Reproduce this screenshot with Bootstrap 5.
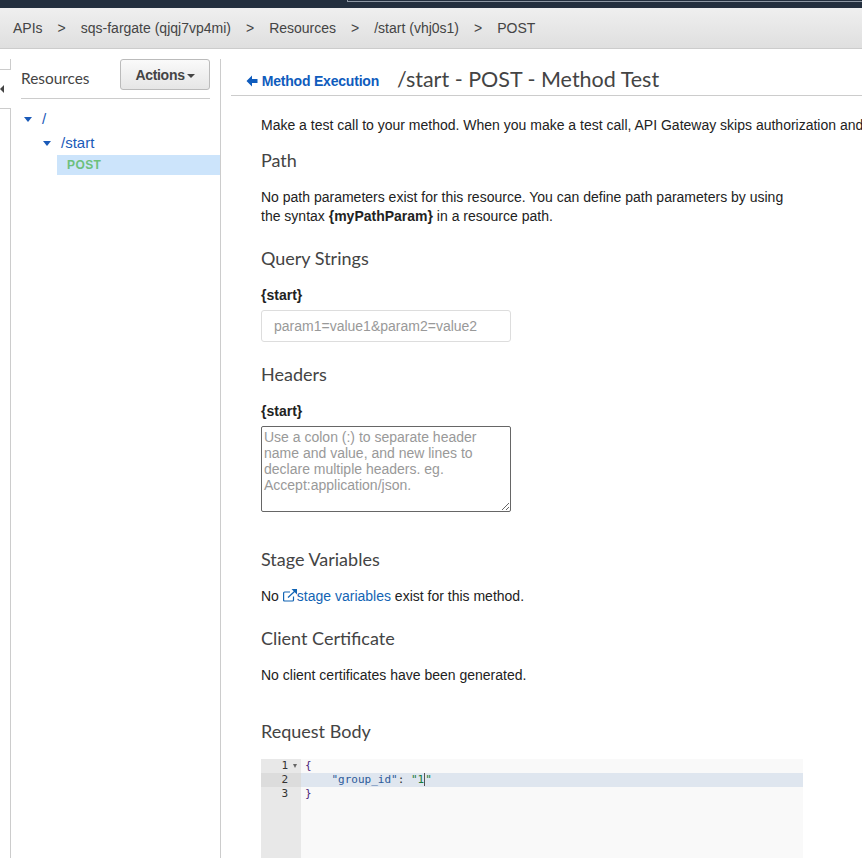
<!DOCTYPE html>
<html lang="en">
<head>
    <meta charset="UTF-8">
    <meta name="viewport" content="width=device-width, initial-scale=1.0">
    <title>API Gateway - Method Test</title>
    <link rel="stylesheet" href="https://cdn.jsdelivr.net/npm/bootstrap@5.3.3/dist/css/bootstrap.min.css">
    <script src="https://cdn.jsdelivr.net/npm/bootstrap@5.3.3/dist/js/bootstrap.bundle.min.js"></script>
    <style>
        html, body { height: 858px; overflow: hidden; }
        body { font-family: "Liberation Sans", Arial, sans-serif; font-size: 14px; line-height: 16px; color: #222; background: #fff; }
        .top-strip { height: 8px; background: #232f3e; }
        .search-edge { height: 2px; margin-left: 347px; border: solid #8d97a3; border-width: 0 0 1px 1px; }
        .crumbs { height: 41px; background: linear-gradient(#efefef, #dfdfdf); border-bottom: 1px solid #ccc; color: #444; padding-left: 13px; }
        .crumbs .sep { margin: 0 15px; }
        .workspace { height: 809px; }
        .rail { width: 11px; padding-top: 10px; flex: none; }
        .rail-box { height: 11px; border: solid #ccc; border-width: 0 1px 1px 0; }
        .rail-arrow { height: 38px; }
        .rail-tri { width: 0; border-right: 4px solid #444; border-top: 4px solid transparent; border-bottom: 4px solid transparent; }
        .rail-body { height: 760px; border: solid #ccc; border-width: 1px 1px 0 0; }
        .tree-pane { width: 210px; flex: none; border-right: 1px solid #ccc; margin-top: 10px; padding-left: 10px; }
        .tree-head { width: 189px; height: 40px; border-bottom: 1px solid #ccc; }
        .tree-title { font-family: Lato, sans-serif; font-size: 15.400px; color: #444; padding-top: 11px; }
        .actions-btn { width: 90px; height: 31px; padding: 0; font-size: 14px; font-weight: 700; color: #444; line-height: 28px; letter-spacing: -.3px; background: linear-gradient(#fafafa, #e6e6e6); border: 1px solid #bbb; border-radius: 3px; }
        .caret-mini { display: inline-block; vertical-align: middle; border-top: 4px solid #444; border-left: 4px solid transparent; border-right: 4px solid transparent; margin-left: 2px; }
        .tree-row { color: #1a5ab8; font-size: 15px; }
        .tree-arrow { display: inline-block; border-top: 5px solid #1a5ab8; border-left: 4.500px solid transparent; border-right: 4.500px solid transparent; }
        .tree-root { height: 16px; margin-top: 12px; padding-left: 3px; gap: 10px; }
        .tree-start { height: 16px; margin-top: 8px; padding-left: 22px; gap: 10px; }
        .tree-post { height: 20px; margin-top: 4px; margin-left: 36px; background: #cce4fb; color: #6cc07c; font-weight: 700; font-size: 12px; line-height: 20px; padding-left: 10px; letter-spacing: .4px; }
        .main-pane { flex: 1; min-width: 0; padding-left: 10px; margin-top: 10px; overflow: hidden; }
        .page-head { height: 37px; border-bottom: 1px solid #ccc; padding-left: 15px; white-space: nowrap; }
        .back-link { font-size: 14px; font-weight: 700; color: #0f5cbd; letter-spacing: -.2px; text-decoration: none; width: 151px; padding-top: 14px; }
        .back-link svg { vertical-align: -1px; }
        .page-title { font-family: Lato, sans-serif; font-size: 21.500px; line-height: 26px; font-weight: 400; color: #444; margin: 0; padding-top: 7px; }
        .test-body { padding-left: 30px; width: 631px; }
        .intro { margin: 21px 0 0; white-space: nowrap; line-height: 16px; }
        .sect { font-family: Lato, sans-serif; font-size: 18px; line-height: 22px; font-weight: 400; color: #444; margin: 0; }
        .sect-path { margin-top: 16px; }
        .sect-query { margin-top: 21px; }
        .sect-headers { margin-top: 21px; }
        .sect-stage { margin-top: 36px; }
        .sect-client { margin-top: 21px; }
        .sect-request { margin-top: 35px; }
        .plain { margin: 17px 0 0; line-height: 19px; }
        .field-label { font-weight: 700; font-size: 14px; margin: 18px 0 0; display: block; color: #222; }
        .query-input { width: 250px; height: 32px; margin-top: 7px; border: 1px solid #ddd; border-radius: 3px; padding: 0 12px; font-size: 14px; display: block; }
        .query-input::placeholder, .header-input::placeholder { color: #999; opacity: 1; }
        .header-input { width: 250px; height: 86px; margin-top: 7px; border: 1px solid #666; border-radius: 2px; padding: 2px; font-family: "Liberation Sans", Arial, sans-serif; font-size: 14px; line-height: 16px; display: block; }
        .doc-link { color: #1264b4; text-decoration: none; }
        .doc-link svg { vertical-align: -1px; }
        .editor { width: 542px; height: 110px; margin-top: 17px; background: #f9f9f9; font-family: "DejaVu Sans Mono", monospace; font-size: 11px; line-height: 14px; }
        .gutter { width: 40px; flex: none; background: #e8e8e8; color: #333; }
        .gutter-line { height: 14px; padding-right: 13px; text-align: right; position: relative; }
        .gutter-line.on { background: #dcdcdc; }
        .fold-mark { position: absolute; right: 4px; top: 5px; border-top: 4px solid #666; border-left: 2.500px solid transparent; border-right: 2.500px solid transparent; }
        .code-line { height: 14px; padding-left: 4px; white-space: pre; color: #333; }
        .code-line.on { background: #dfe6ef; }
        .k-key { color: #2d5a9a; }
        .k-str { color: #1a7a3a; }
        .k-brace { color: #4b1f7a; }
        .ed-cursor { border-left: 1px solid #555; }
    </style>
</head>
<body>
    <div class="top-strip"><div class="search-edge"></div></div>
    <div class="crumbs d-flex align-items-center">
        <span>APIs</span><span class="sep">&gt;</span>
        <span>sqs-fargate (qjqj7vp4mi)</span><span class="sep">&gt;</span>
        <span>Resources</span><span class="sep">&gt;</span>
        <span>/start (vhj0s1)</span><span class="sep">&gt;</span>
        <span>POST</span>
    </div>
    <div class="workspace d-flex">
        <div class="rail">
            <div class="rail-box"></div>
            <div class="rail-arrow d-flex align-items-center"><div class="rail-tri"></div></div>
            <div class="rail-body"></div>
        </div>
        <div class="tree-pane">
            <div class="tree-head d-flex justify-content-between align-items-start">
                <div class="tree-title">Resources</div>
                <button class="btn actions-btn" type="button">Actions<span class="caret-mini"></span></button>
            </div>
            <div class="tree-row tree-root d-flex align-items-center"><span class="tree-arrow"></span><span>/</span></div>
            <div class="tree-row tree-start d-flex align-items-center"><span class="tree-arrow"></span><span>/start</span></div>
            <div class="tree-post">POST</div>
        </div>
        <div class="main-pane">
            <div class="page-head d-flex">
                <a class="back-link" href="#">
                    <svg width="12" height="12" viewBox="0 0 12 12"><path d="M6 .5.500 6 6 11.500V8h5.500V4H6z" fill="#0f5cbd"/></svg>
                    Method Execution</a>
                <h1 class="page-title">/start - POST - Method Test</h1>
            </div>
            <div class="test-body">
                <p class="intro">Make a test call to your method. When you make a test call, API Gateway skips authorization and</p>
                <h2 class="sect sect-path">Path</h2>
                <p class="plain">No path parameters exist for this resource. You can define path parameters by using<br>the syntax <b>{myPathParam}</b> in a resource path.</p>
                <h2 class="sect sect-query">Query Strings</h2>
                <label class="field-label">{start}</label>
                <input class="query-input" type="text" placeholder="param1=value1&amp;param2=value2">
                <h2 class="sect sect-headers">Headers</h2>
                <label class="field-label">{start}</label>
                <textarea class="header-input" placeholder="Use a colon (:) to separate header name and value, and new lines to declare multiple headers. eg. Accept:application/json."></textarea>
                <h2 class="sect sect-stage">Stage Variables</h2>
                <p class="plain">No <a class="doc-link" href="#"><svg width="14" height="13" viewBox="0 0 14 13" fill="none" stroke="#1264b4" stroke-width="1.200"><path d="M10.500 7.500v3.500q0 1-1 1H1.600q-1 0-1-1V4q0-1 1-1H7"/><path d="M5 8.500 12 2"/><path d="M8.500 0H14V5.500z" fill="#1264b4" stroke="none"/></svg>stage variables</a> exist for this method.</p>
                <h2 class="sect sect-client">Client Certificate</h2>
                <p class="plain">No client certificates have been generated.</p>
                <h2 class="sect sect-request">Request Body</h2>
                <div class="editor d-flex">
                    <div class="gutter">
                        <div class="gutter-line">1<span class="fold-mark"></span></div>
                        <div class="gutter-line on">2</div>
                        <div class="gutter-line">3</div>
                    </div>
                    <div class="flex-grow-1">
                        <div class="code-line"><span class="k-brace">{</span></div>
                        <div class="code-line on">    <span class="k-key">"group_id"</span>: <span class="k-str">"1<span class="ed-cursor"></span>"</span></div>
                        <div class="code-line"><span class="k-brace">}</span></div>
                    </div>
                </div>
            </div>
        </div>
    </div>
</body>
</html>
